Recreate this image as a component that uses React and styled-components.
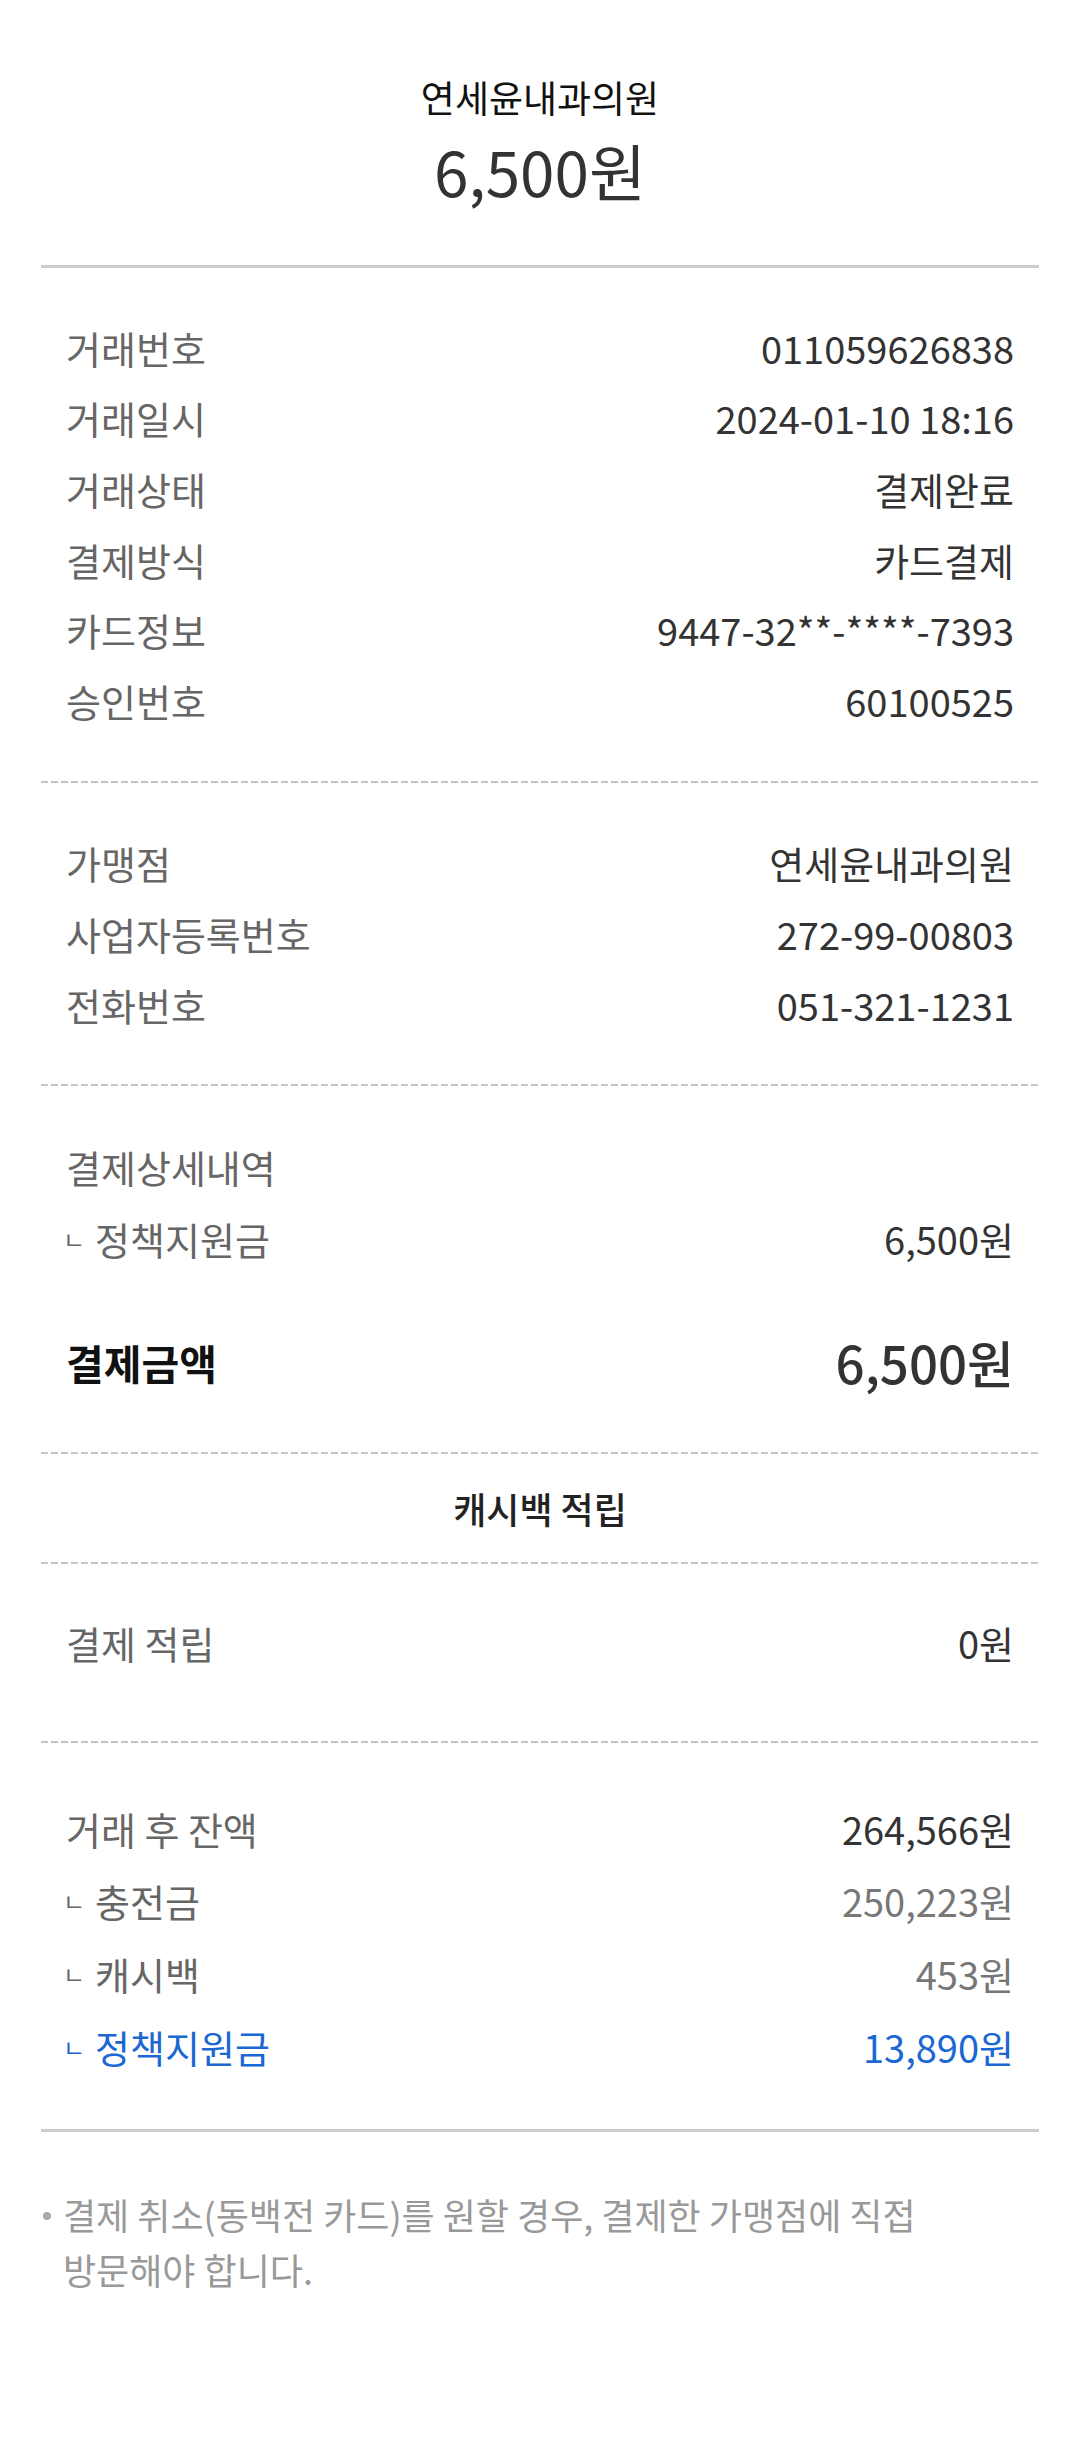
import styled, { createGlobalStyle } from "styled-components";

const GlobalStyle = createGlobalStyle`
  body {
    margin: 0;
    background: #ffffff;
    font-family: "Noto Sans CJK KR", "Noto Sans", sans-serif;
  }
`;

const info = [
  ["거래번호", "011059626838"],
  ["거래일시", "2024-01-10 18:16"],
  ["거래상태", "결제완료"],
  ["결제방식", "카드결제"],
  ["카드정보", "9447-32**-****-7393"],
  ["승인번호", "60100525"],
];

const store = [
  ["가맹점", "연세윤내과의원"],
  ["사업자등록번호", "272-99-00803"],
  ["전화번호", "051-321-1231"],
];

export default function App() {
  return (
    <>
      <GlobalStyle />
      <SCPage>
        <SCHeader>
          <SCStoreName>연세윤내과의원</SCStoreName>
          <SCAmount>6,500원</SCAmount>
        </SCHeader>

        <SCDivider />

        <SCSection $pt={44} $pb={45}>
          {info.map(([label, value]) => (
            <SCRow key={label} $h={70.6}>
              <SCLabel>{label}</SCLabel>
              <SCValue>{value}</SCValue>
            </SCRow>
          ))}
        </SCSection>

        <SCDivider $dashed />

        <SCSection $pt={45} $pb={45}>
          {store.map(([label, value]) => (
            <SCRow key={label} $h={70.6}>
              <SCLabel>{label}</SCLabel>
              <SCValue>{value}</SCValue>
            </SCRow>
          ))}
        </SCSection>

        <SCDivider $dashed />

        <SCSection $pt={44} $pb={50}>
          <SCRow $h={72}>
            <SCLabel>결제상세내역</SCLabel>
          </SCRow>
          <SCRow $h={72}>
            <SCLabel>
              <SCSubMark>ㄴ</SCSubMark>정책지원금
            </SCLabel>
            <SCValue>6,500원</SCValue>
          </SCRow>
          <SCTotalRow>
            <SCTotalLabel>결제금액</SCTotalLabel>
            <SCTotalValue>6,500원</SCTotalValue>
          </SCTotalRow>
        </SCSection>

        <SCDivider $dashed />

        <SCCashbackTitle>캐시백 적립</SCCashbackTitle>

        <SCDivider $dashed />

        <SCSection $pt={43} $pb={63}>
          <SCRow $h={70.6}>
            <SCLabel>결제 적립</SCLabel>
            <SCValue>0원</SCValue>
          </SCRow>
        </SCSection>

        <SCDivider $dashed />

        <SCSection $pt={49} $pb={46}>
          <SCRow $h={72.7}>
            <SCLabel>거래 후 잔액</SCLabel>
            <SCValue>264,566원</SCValue>
          </SCRow>
          <SCRow $h={72.7}>
            <SCLabel>
              <SCSubMark>ㄴ</SCSubMark>충전금
            </SCLabel>
            <SCValue $tone="sub">250,223원</SCValue>
          </SCRow>
          <SCRow $h={72.7}>
            <SCLabel>
              <SCSubMark>ㄴ</SCSubMark>캐시백
            </SCLabel>
            <SCValue $tone="sub">453원</SCValue>
          </SCRow>
          <SCRow $h={72.7}>
            <SCLabel $tone="blue">
              <SCSubMark>ㄴ</SCSubMark>정책지원금
            </SCLabel>
            <SCValue $tone="blue">13,890원</SCValue>
          </SCRow>
        </SCSection>

        <SCDivider />

        <SCNotice>
          <SCDot />
          <SCNoticeText>
            결제 취소(동백전 카드)를 원할 경우, 결제한 가맹점에 직접
            <br />
            방문해야 합니다.
          </SCNoticeText>
        </SCNotice>
      </SCPage>
    </>
  );
}

const SCPage = styled.div`
  padding: 0 41px 160px;
`;

const SCHeader = styled.header`
  display: flex;
  flex-direction: column;
  align-items: center;
  padding: 72px 0 55px;
`;

const SCStoreName = styled.h1`
  margin: 0;
  font-size: 37px;
  line-height: 50px;
  font-weight: 400;
  color: #111111;
`;

const SCAmount = styled.p`
  margin: 8px 0 0;
  font-size: 62px;
  line-height: 80px;
  font-weight: 400;
  color: #333333;
`;

const SCDivider = styled.div`
  height: ${(p) => (p.$dashed ? "2px" : "3px")};
  background: ${(p) =>
    p.$dashed
      ? "repeating-linear-gradient(to right, #c4c4c4 0 7px, transparent 7px 10px)"
      : "#cccccc"};
`;

const SCSection = styled.section`
  padding: ${(p) => p.$pt}px 25px ${(p) => p.$pb}px;
`;

const SCRow = styled.div`
  display: flex;
  justify-content: space-between;
  align-items: center;
  height: ${(p) => p.$h}px;
`;

const toneColor = {
  blue: "#1b67d3",
  sub: "#777777",
};

const SCLabel = styled.span`
  display: flex;
  align-items: center;
  font-size: 38px;
  color: ${(p) => toneColor[p.$tone] || "#666666"};
`;

const SCValue = styled.span`
  font-size: 38px;
  color: ${(p) => toneColor[p.$tone] || "#333333"};
`;

const SCSubMark = styled.span`
  font-size: 24px;
  margin: 0 10px 0 -3px;
`;

const SCTotalRow = styled.div`
  display: flex;
  justify-content: space-between;
  align-items: center;
  height: 80px;
  margin-top: 48px;
`;

const SCTotalLabel = styled.span`
  font-size: 41px;
  font-weight: 700;
  color: #111111;
`;

const SCTotalValue = styled.span`
  font-size: 51px;
  font-weight: 500;
  color: #333333;
`;

const SCCashbackTitle = styled.h2`
  margin: 0;
  padding: 29px 0;
  text-align: center;
  font-size: 36px;
  line-height: 50px;
  font-weight: 500;
  color: #222222;
`;

const SCNotice = styled.div`
  display: flex;
  align-items: flex-start;
  gap: 12px;
  padding: 55px 0 0 2px;
`;

const SCDot = styled.span`
  flex: none;
  width: 8px;
  height: 8px;
  margin-top: 25px;
  border-radius: 50%;
  background: #aaaaaa;
`;

const SCNoticeText = styled.p`
  margin: 0;
  font-size: 36px;
  line-height: 55px;
  color: #999999;
  word-break: keep-all;
`;
